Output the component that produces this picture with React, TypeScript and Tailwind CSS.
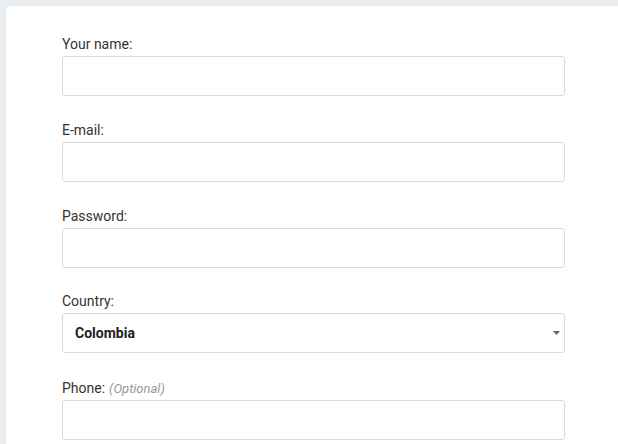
import React from "react";

function Field({ label, optional, className, children }: { label: string; optional?: boolean; className?: string; children?: React.ReactNode }) {
  return (
    <div className={className ?? "mb-[24px]"}>
      <label className="block h-[20px] text-[14px] leading-[20px] text-[#333] mb-[2px]">
        {label}
        {optional && <em className="ml-[4px] text-[13px] text-[#999]">(Optional)</em>}
      </label>
      {children ?? (
        <div className="h-[40px] w-[503px] rounded-[3px] border border-[#dadada] bg-white" />
      )}
    </div>
  );
}

export default function App() {
  return (
    <div className="h-[444px] bg-[#e9eef3] pl-[6px] pt-[6px] overflow-hidden" style={{ fontFamily: "Roboto, 'Liberation Sans', sans-serif" }}>
      <div className="h-[438px] overflow-hidden rounded-tl-[4px] bg-white pl-[56px] pt-[28px]">
        <Field label="Your name:" />
        <Field label="E-mail:" />
        <Field label="Password:" className="mb-[23px]" />
        <Field label="Country:" className="mb-[25px]">
          <div className="flex h-[40px] w-[503px] items-center justify-between rounded-[3px] border border-[#dadada] bg-white pl-[12px] pr-[4px]">
            <span className="text-[14px] font-bold text-[#222]">Colombia</span>
            <svg width="7" height="4" viewBox="0 0 7 4"><path d="M0 0h7L3.5 4z" fill="#666" /></svg>
          </div>
        </Field>
        <Field label="Phone:" optional />
      </div>
    </div>
  );
}
